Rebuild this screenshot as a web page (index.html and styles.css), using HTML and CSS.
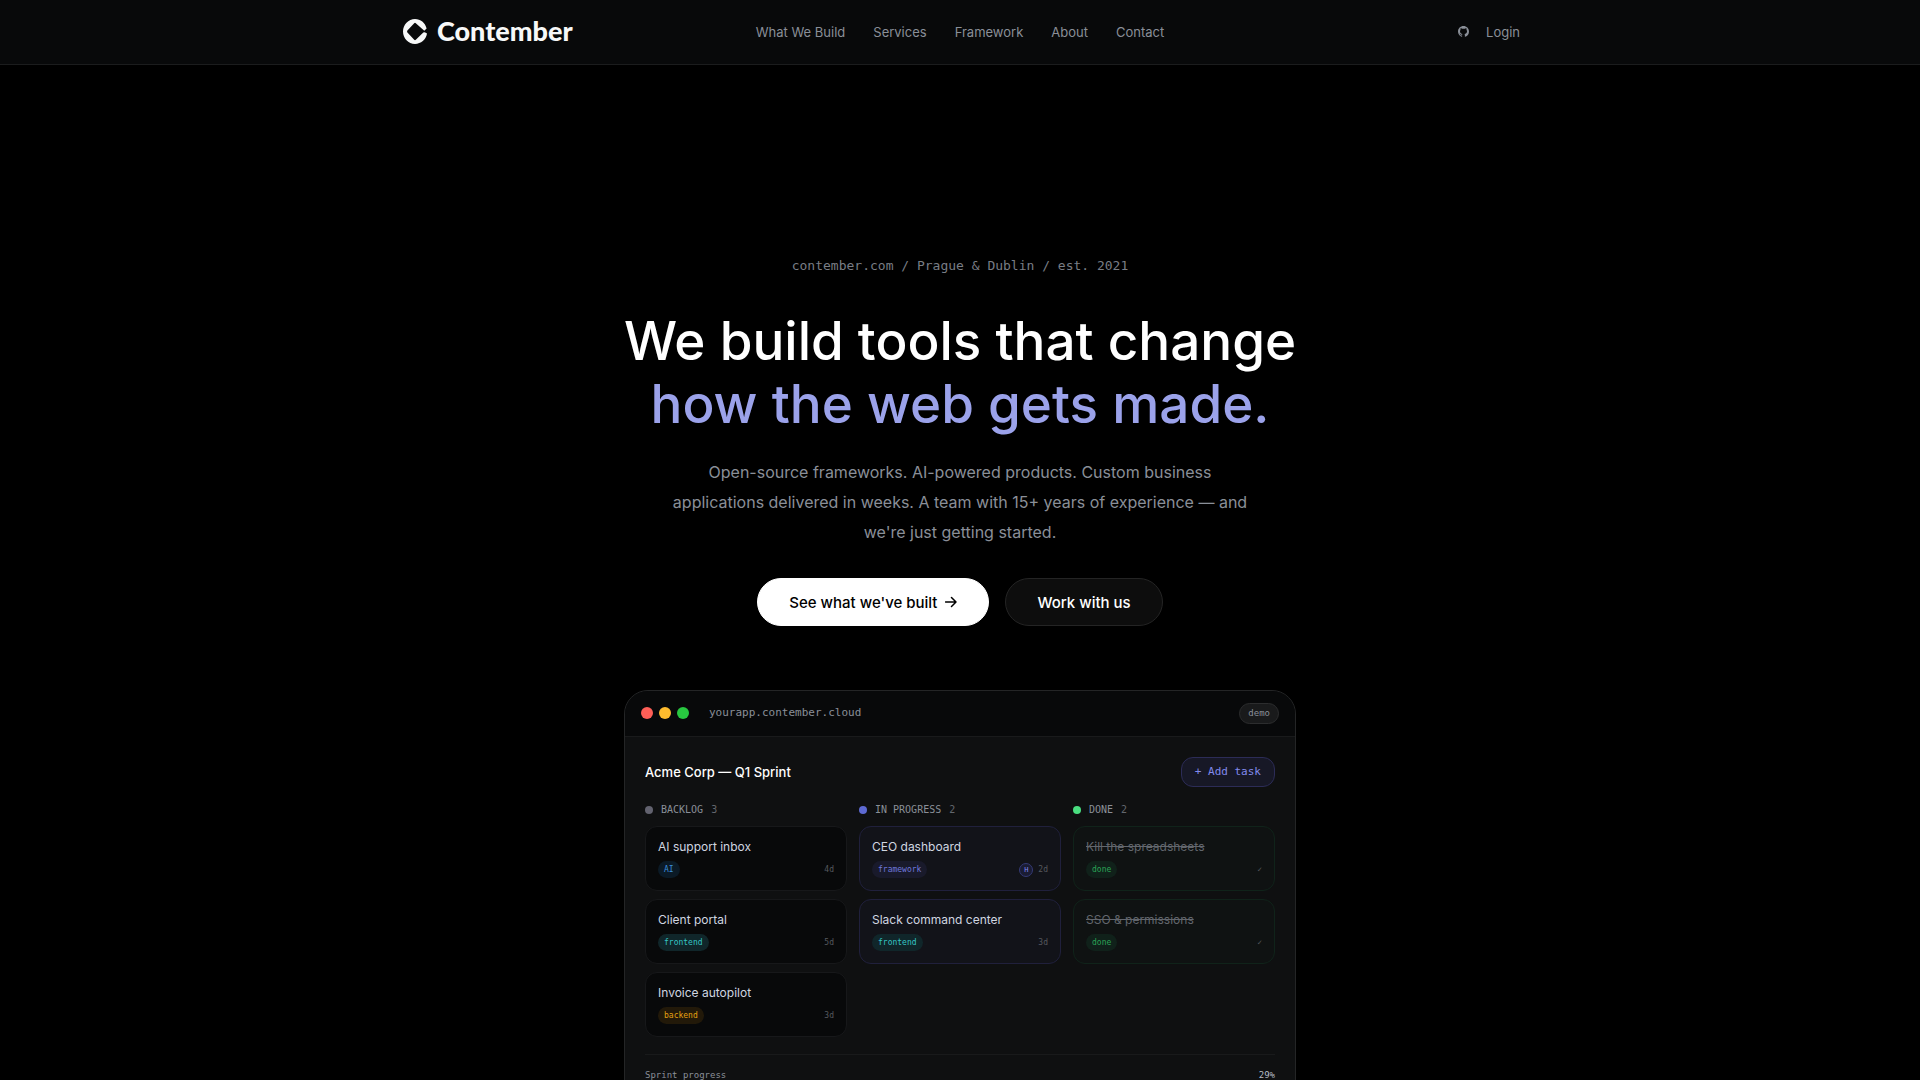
FILE: index.html
```html
<!DOCTYPE html>
<html lang="en">
<head>
<meta charset="utf-8">
<meta name="viewport" content="width=device-width, initial-scale=1">
<title>Contember</title>
<link rel="stylesheet" href="styles.css">
</head>
<body>
<header class="site-header">
  <div class="header-inner">
    <a class="logo" href="#">
      <svg class="logo-mark" viewBox="0 0 24 25" aria-hidden="true"><path fill="currentColor" d="M12 0C17.500 0 22.200 3.800 23.600 9.400L21.300 11.800L12.800 4.200Q12 3.500 11.200 4.200L4.400 11.600Q3.700 12.500 4.400 13.400L11.200 20.800Q12 21.500 12.800 20.800L20.300 13.600Q21.200 12.900 22.200 13.500L24 14.600C23 20.600 18 25 12 25C5.400 25 0 19.400 0 12.500S5.400 0 12 0Z"/></svg>
      <span class="wordmark">Contember</span>
    </a>
    <nav class="nav-links">
      <a href="#">What We Build</a>
      <a href="#">Services</a>
      <a href="#">Framework</a>
      <a href="#">About</a>
      <a href="#">Contact</a>
    </nav>
    <div class="header-actions">
      <a href="#" aria-label="GitHub"><svg class="github" viewBox="0 0 16 16" aria-hidden="true"><path fill="currentColor" d="M8 0C3.580 0 0 3.580 0 8c0 3.540 2.290 6.530 5.470 7.590.4.070.55-.17.55-.38 0-.19-.01-.82-.01-1.490-2.010.37-2.530-.49-2.690-.94-.09-.23-.48-.94-.82-1.130-.28-.15-.68-.52-.01-.53.63-.01 1.080.58 1.230.82.72 1.210 1.870.87 2.330.66.070-.52.28-.87.51-1.070-1.780-.2-3.640-.89-3.640-3.950 0-.87.31-1.590.82-2.150-.08-.2-.36-1.020.08-2.120 0 0 .67-.21 2.200.82.64-.18 1.320-.27 2-.27s1.360.09 2 .27c1.530-1.040 2.200-.82 2.200-.82.44 1.100.16 1.920.08 2.120.51.56.82 1.270.82 2.150 0 3.070-1.870 3.750-3.650 3.950.29.25.54.73.54 1.480 0 1.070-.01 1.930-.01 2.200 0 .21.15.46.55.38A8.010 8.010 0 0 0 16 8c0-4.420-3.580-8-8-8z"/></svg></a>
      <a href="#">Login</a>
    </div>
  </div>
</header>

<main class="hero">
  <p class="eyebrow">contember.com / Prague &amp; Dublin / est. 2021</p>
  <h1 class="headline">We build tools that change<br><span class="accent">how the web gets made.</span></h1>
  <p class="lead">Open-source frameworks. AI-powered products. Custom business applications delivered in weeks. A team with 15+ years of experience — and we're just getting started.</p>
  <div class="cta">
    <a class="btn btn-light" href="#">See what we've built
      <svg class="arrow" viewBox="0 0 12 12" aria-hidden="true"><path d="M0.500 6H11M6.500 1.500L11 6L6.500 10.500" fill="none" stroke="currentColor" stroke-width="1.500" stroke-linecap="round" stroke-linejoin="round"/></svg>
    </a>
    <a class="btn btn-dark" href="#">Work with us</a>
  </div>

  <section class="window">
    <div class="window-bar">
      <span class="light red"></span><span class="light yellow"></span><span class="light green"></span>
      <span class="url">yourapp.contember.cloud</span>
      <span class="demo">demo</span>
    </div>
    <div class="window-body">
      <div class="board-head">
        <h2 class="board-title">Acme Corp — Q1 Sprint</h2>
        <button class="add-task" type="button">+ Add task</button>
      </div>
      <div class="board">
        <section class="column">
          <h3 class="column-head"><span class="dot grey"></span>BACKLOG <span class="count">3</span></h3>
          <article class="card">
            <h4 class="card-title">AI support inbox</h4>
            <div class="card-meta"><span class="tag ai">AI</span><span class="due">4d</span></div>
          </article>
          <article class="card">
            <h4 class="card-title">Client portal</h4>
            <div class="card-meta"><span class="tag frontend">frontend</span><span class="due">5d</span></div>
          </article>
          <article class="card">
            <h4 class="card-title">Invoice autopilot</h4>
            <div class="card-meta"><span class="tag backend">backend</span><span class="due">3d</span></div>
          </article>
        </section>
        <section class="column">
          <h3 class="column-head"><span class="dot indigo"></span>IN PROGRESS <span class="count">2</span></h3>
          <article class="card active">
            <h4 class="card-title">CEO dashboard</h4>
            <div class="card-meta"><span class="tag framework">framework</span><span class="avatar">H</span><span class="due">2d</span></div>
          </article>
          <article class="card active">
            <h4 class="card-title">Slack command center</h4>
            <div class="card-meta"><span class="tag frontend">frontend</span><span class="due">3d</span></div>
          </article>
        </section>
        <section class="column">
          <h3 class="column-head"><span class="dot green-dot"></span>DONE <span class="count">2</span></h3>
          <article class="card finished">
            <h4 class="card-title">Kill the spreadsheets</h4>
            <div class="card-meta"><span class="tag done">done</span><span class="due">✓</span></div>
          </article>
          <article class="card finished">
            <h4 class="card-title">SSO &amp; permissions</h4>
            <div class="card-meta"><span class="tag done">done</span><span class="due">✓</span></div>
          </article>
        </section>
      </div>
      <div class="progress-row"><span>Sprint progress</span><span class="percent">29%</span></div>
    </div>
  </section>
</main>
</body>
</html>
```
FILE: styles.css
```css
:root {
  --sans: Inter, "Liberation Sans", sans-serif;
  --mono: "DejaVu Sans Mono", "Liberation Mono", monospace;
  --muted: #8a8f98;
}

* { box-sizing: border-box; }

body {
  margin: 0;
  height: 100vh;
  overflow: hidden;
  background: #000;
  color: #fff;
  font-family: var(--sans);
}

h1, h2, h3, h4, p { margin: 0; }
a { color: inherit; text-decoration: none; }

.site-header {
  background: #08090a;
  border-bottom: 1px solid #1b1c1d;
}

.header-inner {
  display: grid;
  grid-template-columns: 1fr auto 1fr;
  align-items: center;
  max-width: 1200px;
  height: 64px;
  margin: 0 auto;
  padding: 0 40px 1px;
  color: var(--muted);
  font-size: 13px;
}

.logo {
  display: flex;
  align-items: center;
  gap: 10px;
  padding-left: 3px;
  color: #f7f8f8;
  font: 900 27px/32px Lato, sans-serif;
}
.logo-mark { width: 24px; height: 25px; }
.wordmark { padding-bottom: 2px; }

.nav-links { display: flex; gap: 28px; }

.header-actions {
  display: flex;
  justify-content: flex-end;
  align-items: center;
  gap: 17px;
}
.header-actions a { display: flex; }
.github { width: 11px; height: 11px; }

.hero {
  display: flex;
  flex-direction: column;
  align-items: center;
  padding: 191px 24px 0;
  text-align: center;
}

.eyebrow {
  color: #797d85;
  font: 13px/20px var(--mono);
}

.headline {
  margin-top: 34px;
  font-size: 53px;
  line-height: 63px;
  font-weight: 500;
}
.accent { color: #9ba2ea; }

.lead {
  max-width: 584px;
  margin-top: 21px;
  color: var(--muted);
  font-size: 16px;
  line-height: 30px;
}

.cta {
  display: flex;
  gap: 16px;
  margin-top: 31px;
}
.btn {
  display: flex;
  align-items: center;
  gap: 8px;
  height: 48px;
  padding: 0 31px;
  border: 1px solid #fff;
  border-radius: 24px;
  font-size: 15px;
  font-weight: 500;
}
.btn-light { background: #fff; color: #000; }
.btn-dark { background: #0d0d0d; border-color: #242424; color: #fff; }
.arrow { width: 12px; height: 12px; }

.window {
  width: 100%;
  max-width: 672px;
  margin-top: 64px;
  border: 1px solid #242526;
  border-radius: 24px;
  background: #0f1011;
  overflow: hidden;
  text-align: left;
}

.window-bar {
  display: flex;
  align-items: center;
  gap: 6px;
  height: 46px;
  padding: 0 16px 1px;
  border-bottom: 1px solid #191a1b;
  background: #08090a;
}
.light { width: 12px; height: 12px; border-radius: 50%; }
.red { background: #ff5f57; }
.yellow { background: #febc2e; }
.green { background: #28c840; }
.url {
  margin-left: 14px;
  color: var(--muted);
  font: 11px/16px var(--mono);
}
.demo {
  margin-left: auto;
  padding: 0 8px;
  border: 1px solid #2c2d2e;
  border-radius: 11px;
  background: #191a1b;
  color: var(--muted);
  font: 9px/19px var(--mono);
}

.window-body { padding: 20px; }

.board-head {
  display: flex;
  justify-content: space-between;
  align-items: center;
}
.board-title {
  font-size: 13px;
  line-height: 20px;
  font-weight: 500;
}
.add-task {
  height: 30px;
  padding: 0 13px;
  border: 1px solid #2c2c57;
  border-radius: 12px;
  background: #171826;
  color: #828aec;
  font: 11px/16px var(--mono);
}

.board {
  display: grid;
  grid-template-columns: repeat(3, 1fr);
  gap: 12px;
  margin-top: 15px;
}
.column {
  display: flex;
  flex-direction: column;
  gap: 8px;
}
.column-head {
  display: flex;
  align-items: center;
  gap: 8px;
  color: var(--muted);
  font: 10px/16px var(--mono);
}
.count { color: #62666d; }
.dot { width: 8px; height: 8px; border-radius: 50%; }
.grey { background: #62626f; }
.indigo { background: #5e6ad2; }
.green-dot { background: #4ade80; }

.card {
  padding: 11px 12px 12px;
  border: 1px solid #17181a;
  border-radius: 12px;
  background: #08090a;
}
.card.active { background: #121319; border-color: #20203c; }
.card.finished { background: #0f1212; border-color: #10231a; }
.card-title {
  color: #d0d6e0;
  font-size: 12px;
  line-height: 18px;
  font-weight: 400;
}
.finished .card-title { color: #62666d; text-decoration: line-through; }
.card-meta {
  display: flex;
  align-items: center;
  gap: 5px;
  margin-top: 5px;
  font: 8px/17px var(--mono);
}
.tag { padding: 0 6px; border-radius: 9px; }
.ai { background: #0b1a26; color: #3b8fdb; }
.frontend { background: #10262a; color: #35c5c5; }
.backend { background: #221909; color: #e5a211; }
.framework { background: #191a2b; color: #6f78dd; }
.done { background: #10211a; color: #2aa356; }
.due { color: #56595f; }
.due:last-child { margin-left: auto; }
.avatar {
  width: 14px;
  height: 14px;
  margin-left: auto;
  border: 1px solid #343a75;
  border-radius: 50%;
  background: #1a1c33;
  color: #828aec;
  font-size: 7px;
  line-height: 12px;
  text-align: center;
}
.avatar + .due:last-child { margin-left: 0; }

.progress-row {
  display: flex;
  justify-content: space-between;
  margin-top: 17px;
  padding-top: 12px;
  border-top: 1px solid #191a1b;
  color: var(--muted);
  font: 9px/16px var(--mono);
}
.percent { color: #b4bac4; }
```
